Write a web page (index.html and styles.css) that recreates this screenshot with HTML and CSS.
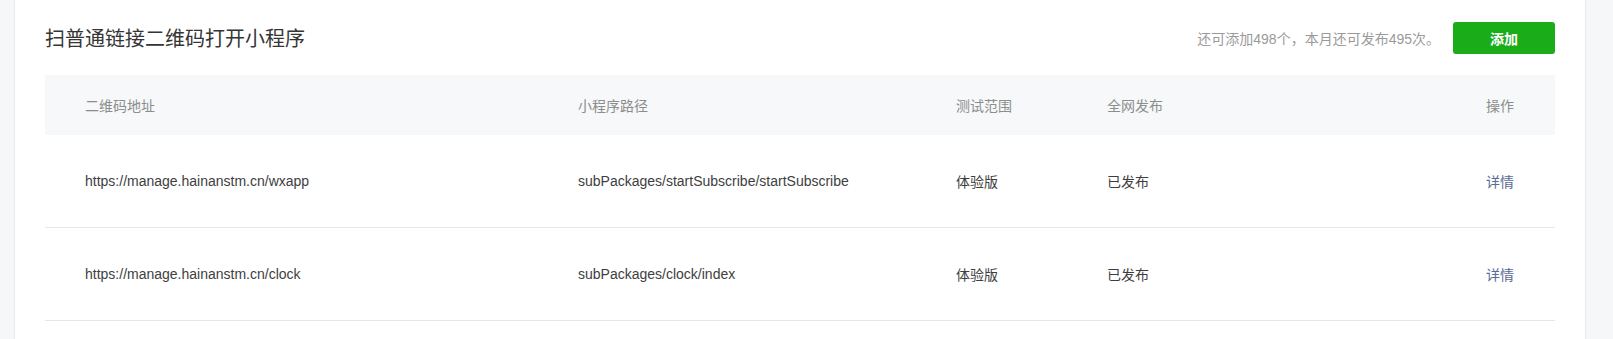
FILE: index.html
```html
<!DOCTYPE html>
<html lang="zh-CN">
<head>
<meta charset="utf-8">
<title>扫普通链接二维码打开小程序</title>
<link rel="stylesheet" href="styles.css">
</head>
<body>
<div class="card">
  <div class="head">
    <h2 class="title">扫普通链接二维码打开小程序</h2>
    <div class="actions">
      <span class="quota">还可添加498个，本月还可发布495次。</span>
      <button class="btn-add">添加</button>
    </div>
  </div>
  <div class="table">
    <div class="row thead">
      <div class="cell">二维码地址</div>
      <div class="cell">小程序路径</div>
      <div class="cell">测试范围</div>
      <div class="cell">全网发布</div>
      <div class="cell op">操作</div>
    </div>
    <div class="row">
      <div class="cell">https://manage.hainanstm.cn/wxapp</div>
      <div class="cell">subPackages/startSubscribe/startSubscribe</div>
      <div class="cell">体验版</div>
      <div class="cell">已发布</div>
      <div class="cell op"><a class="link">详情</a></div>
    </div>
    <div class="row">
      <div class="cell">https://manage.hainanstm.cn/clock</div>
      <div class="cell">subPackages/clock/index</div>
      <div class="cell">体验版</div>
      <div class="cell">已发布</div>
      <div class="cell op"><a class="link">详情</a></div>
    </div>
  </div>
</div>
</body>
</html>
```

FILE: styles.css
```css
html, body {
  margin: 0;
  padding: 0;
}
body {
  background: #f6f7f9;
  font-family: "Liberation Sans", "Noto Sans CJK SC", sans-serif;
  color: #353535;
  font-size: 14px;
}
.card {
  margin-left: 14px;
  width: 1572px;
  box-sizing: border-box;
  min-height: 100vh;
  background: #fff;
  border-left: 1px solid #e9eaec;
  border-right: 1px solid #e9eaec;
  padding: 0 30px;
}
.head {
  display: flex;
  align-items: center;
  justify-content: space-between;
  height: 32px;
  padding-top: 22px;
  margin-bottom: 21px;
}
.title {
  margin: 0;
  font-size: 20px;
  font-weight: normal;
  color: #353535;
  font-family: "Noto Sans CJK SC", sans-serif;
  line-height: 32px;
}
.actions {
  display: flex;
  align-items: center;
  gap: 13px;
}
.quota {
  color: #9a9a9a;
  font-size: 14px;
}
.btn-add {
  width: 102px;
  height: 32px;
  border: 0;
  border-radius: 3px;
  background: #1aad19;
  color: #fff;
  font-size: 14px;
  font-weight: bold;
  font-family: "Noto Sans CJK SC", sans-serif;
  padding: 0;
}
.table {
  width: 1510px;
}
.row {
  display: grid;
  grid-template-columns: 493px 378px 151px 1fr auto;
  align-items: center;
  padding: 0 41px 0 40px;
  height: 93px;
  box-sizing: border-box;
  border-bottom: 1px solid #e7e7eb;
  color: #3e3e3e;
}
.row.thead {
  height: 60px;
  background: #f6f8f9;
  border-bottom: 0;
  color: #8d8d8d;
}
.cell.op {
  text-align: right;
}
.link {
  color: #576b95;
  text-decoration: none;
}
```
